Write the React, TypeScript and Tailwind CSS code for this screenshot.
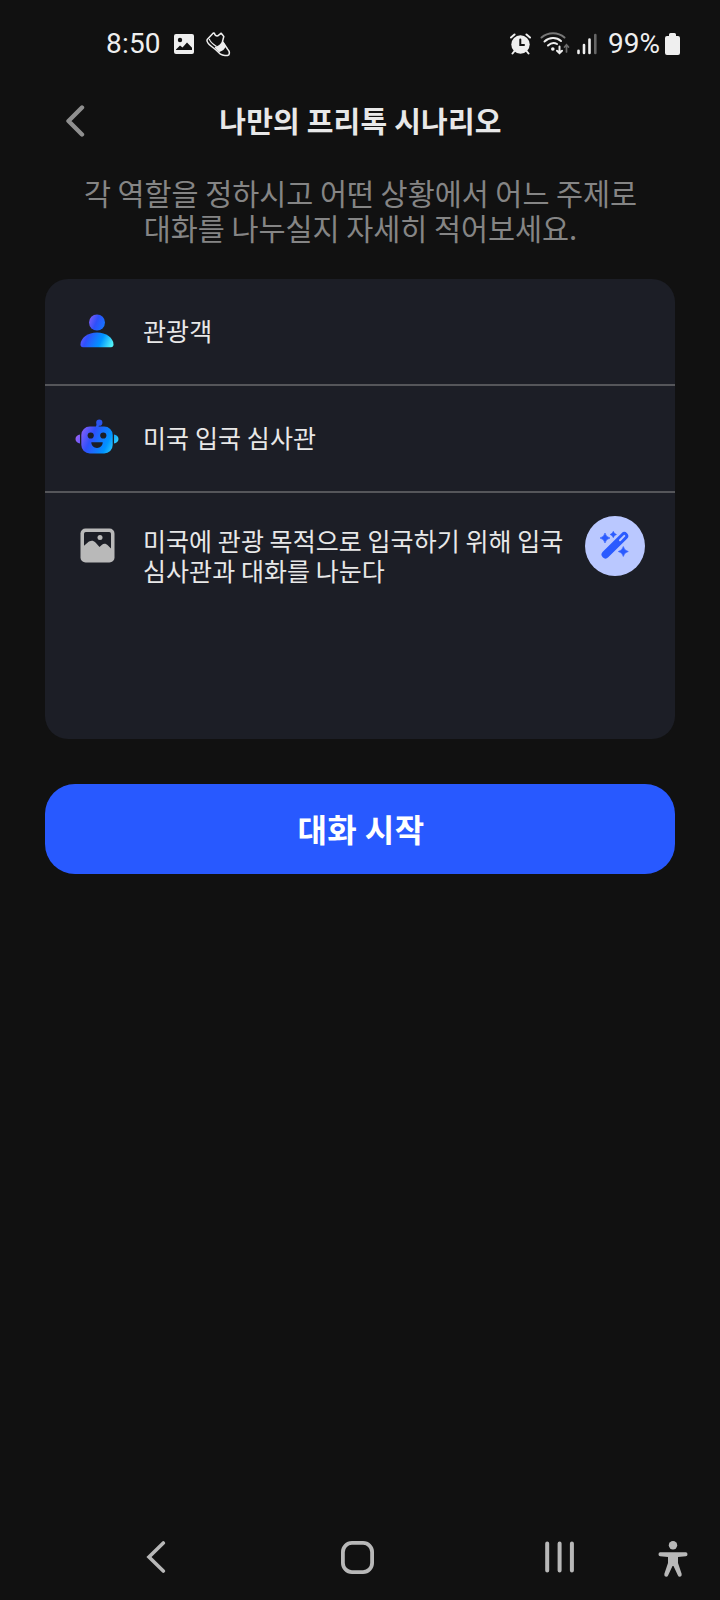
import type { ReactNode } from "react";

function BrandGradient({ id, size }: { id: string; size: number }) {
  return (
    <linearGradient id={id} gradientUnits="userSpaceOnUse" x1="0" y1={size * 0.3} x2={size} y2={size * 0.75}>
      <stop offset="0" stopColor="#9d62f5" />
      <stop offset="0.33" stopColor="#2f50fb" />
      <stop offset="0.7" stopColor="#0094ff" />
      <stop offset="1" stopColor="#4ff0f8" />
    </linearGradient>
  );
}

function PersonIcon() {
  return (
    <svg className="-mt-[1px]" width="34" height="34" viewBox="0 0 34 34">
      <defs>
        <BrandGradient id="person" size={34} />
        <linearGradient id="head" x1="0" y1="0.3" x2="1" y2="0.7">
          <stop offset="0" stopColor="#7a5cf6" />
          <stop offset="0.45" stopColor="#2e4ffa" />
          <stop offset="1" stopColor="#1477ff" />
        </linearGradient>
      </defs>
      <circle cx="17" cy="8.5" r="8" fill="url(#head)" />
      <path
        d="M17 18.5C26 18.5 33.5 24 33.5 30.5C33.5 32.3 32.6 33.3 31 33.3H3C1.4 33.3 0.5 32.3 0.5 30.5C0.5 24 8 18.5 17 18.5Z"
        fill="url(#person)"
      />
    </svg>
  );
}

function RobotIcon() {
  return (
    <svg className="mt-[4px] overflow-visible" width="44" height="34" viewBox="0 0 44 34">
      <defs>
        <BrandGradient id="robot" size={42} />
      </defs>
      <path
        d="M5 10.5V19.5C2.5 19 0.5 17.5 0.5 15C0.5 12.5 2.5 11 5 10.5ZM39 10.5V19.5C41.5 19 43.5 17.5 43.5 15C43.5 12.5 41.5 11 39 10.5Z"
        fill="url(#robot)"
      />
      <rect x="6.3" y="2.5" width="31.4" height="27" rx="8.5" fill="url(#robot)" />
      <path d="M21.8 4L23.5 -1" stroke="#2b5bf3" strokeWidth="2.5" />
      <circle cx="24.3" cy="-1.3" r="3.1" fill="#2b55ee" />
      <circle cx="15.7" cy="11.5" r="3.1" fill="#1c1e26" />
      <circle cx="28.3" cy="11.5" r="3.1" fill="#1c1e26" />
      <path d="M16.3 18.3H27.7C27.7 21.5 25.2 24 22 24S16.3 21.5 16.3 18.3Z" fill="#1c1e26" />
    </svg>
  );
}

function SceneIcon() {
  return (
    <svg width="35" height="35" viewBox="0 0 35 35">
      <rect x="0.5" y="0.5" width="34" height="34" rx="5" fill="#b9b9b9" />
      <path
        d="M5.8 4H29.2Q31 4 31 5.8V20.5L28 17.5C26 15.5 23.7 15.3 21.7 17L19.5 19L15.5 14.5C13 12 10.3 12.3 7.5 14.7L4 17.7V5.8Q4 4 5.8 4Z"
        fill="#1c1e26"
      />
      <circle cx="20" cy="9.5" r="2.5" fill="#b9b9b9" />
    </svg>
  );
}

function WandIcon() {
  return (
    <svg width="30" height="30" viewBox="0 0 30 30" fill="#2b5bff">
      <path d="M5.5 23.5L24.3 5" stroke="#2b5bff" strokeWidth="7.8" strokeLinecap="round" />
      <path d="M20 9.2L24.3 4.9" stroke="#bac8ff" strokeWidth="2" strokeLinecap="round" />
      <path d="M5 2Q5.9 6.1 10 7Q5.9 7.9 5 12Q4.1 7.9 0 7Q4.1 6.1 5 2Z" stroke="#2b5bff" strokeWidth="0.6" />
      <path d="M13.3 0.3Q14 2.8 16.5 3.5Q14 4.2 13.3 6.7Q12.6 4.2 10.1 3.5Q12.6 2.8 13.3 0.3Z" stroke="#2b5bff" strokeWidth="0.5" />
      <path d="M23.3 15.5Q24.2 19.6 28.3 20.5Q24.2 21.4 23.3 25.5Q22.4 21.4 18.3 20.5Q22.4 19.6 23.3 15.5Z" stroke="#2b5bff" strokeWidth="0.6" />
    </svg>
  );
}

function StatusBar() {
  return (
    <div className="flex h-[87px] items-center justify-between pl-[106px] pr-[39px] font-['Roboto',sans-serif] text-[28px] text-[#efefef]">
      <div className="flex items-center">
        <span className="w-[54px] whitespace-nowrap tracking-[0.2px]">8:50</span>
        <svg className="ml-[14px]" width="20" height="20" viewBox="0 0 20 20">
          <rect width="20" height="20" rx="2" fill="#efefef" />
          <circle cx="6" cy="6" r="2.2" fill="#111" />
          <path d="M2 15.5L6 11.5L8.5 13.5L13 8.5L18 13.8V16H2Z" fill="#111" />
        </svg>
        <svg className="ml-[12px] mt-[1px]" width="25" height="25" viewBox="0 0 25 25" fill="none" stroke="#efefef" strokeWidth="1.5" strokeLinejoin="round">
          <path d="M7.3 1L1.2 7.5C0.5 9 2.5 12 5 14L10 18L14.5 22.2C17 23.8 21 24 22.8 22.8C24.2 20.5 23.2 18.8 21.5 17L18.8 13L16.5 9.5L17.8 4.5L15.2 1.2L11.8 3.8C10 4.2 8.8 3 8.5 1.3Z" />
          <path d="M3.3 6.8C4 10 7.5 12.5 10.5 14.5" strokeWidth="1.2" />
          <path d="M9.5 15.5C12.5 15 15 13.2 16.5 10.2L19.2 14C18.2 16.5 16 18.5 13.2 19.2Z" fill="#efefef" />
        </svg>
      </div>
      <div className="flex items-center">
        <svg width="21" height="22" viewBox="0 0 21 22" fill="none" stroke="#efefef" strokeLinecap="round">
          <circle cx="10.5" cy="11.5" r="9.2" fill="#efefef" stroke="none" />
          <path d="M1 4.5L4.5 1.5M20 4.5L16.5 1.5M4.5 18L2.5 20.5M16.5 18L18.5 20.5" strokeWidth="2" />
          <path d="M10.3 6.5V12H14" stroke="#111" strokeWidth="2" />
        </svg>
        <svg className="ml-[9px]" width="30" height="23" viewBox="0 0 30 23" fill="none" stroke="#efefef" strokeWidth="2" strokeLinecap="round">
          <path d="M1.5 5.5C8 -0.3 18 -0.3 24.5 5.5" stroke="#777" />
          <path d="M4.5 9.5C9.5 5 16.5 5 21 9M8 13.5C11 10.8 14.5 10.5 17 12" />
          <circle cx="12.8" cy="17" r="1.8" fill="#efefef" stroke="none" />
          <path d="M19.5 14.5V21M17 18.8L19.5 21.2L22 18.8" />
          <path d="M26.5 20V13M24.5 15L26.5 12.8L28.5 15" stroke="#6b6b6b" strokeWidth="1.7" />
        </svg>
        <svg className="ml-[7px]" width="20" height="22" viewBox="0 0 20 22" strokeWidth="2.6" strokeLinecap="round" stroke="#efefef">
          <path d="M1.5 17.7V20M7 12V20M12.5 6.5V20" />
          <path d="M18.3 2V20" stroke="#666" />
        </svg>
        <span className="ml-[11px] w-[52px] whitespace-nowrap">99%</span>
        <svg className="ml-[5px] mr-[1px] mt-[1px]" width="15" height="22" viewBox="0 0 15 22" fill="#efefef">
          <path d="M4 3V1.5Q4 0 5.5 0H9.5Q11 0 11 1.5V3H13Q15 3 15 5V20Q15 22 13 22H2Q0 22 0 20V5Q0 3 2 3Z" />
        </svg>
      </div>
    </div>
  );
}

function RoleRow({ icon, label }: { icon: ReactNode; label: string }) {
  return (
    <div className="flex h-[107px] items-center border-b-2 border-[#55565a]">
      <div className="flex w-[98px] justify-center pl-[6px]">{icon}</div>
      <span className="pb-[4px] tracking-[0.1px]">{label}</span>
    </div>
  );
}

function NavBar() {
  return (
    <div className="flex h-[86px] items-center pl-[146px] pr-[32px] text-[#b8b8b8]">
      <svg width="20" height="32" viewBox="0 0 20 32" fill="none" stroke="currentColor" strokeWidth="3.6" strokeLinecap="round">
        <path d="M17.3 2L3 16L17.3 30" />
      </svg>
      <svg className="ml-[175px]" width="33" height="33" viewBox="0 0 33 33" fill="none" stroke="currentColor" strokeWidth="3.8">
        <rect x="1.9" y="1.9" width="29.2" height="29.2" rx="9" />
      </svg>
      <svg className="ml-[171px]" width="30" height="32" viewBox="0 0 30 32" stroke="currentColor" strokeWidth="4" strokeLinecap="round">
        <path d="M2.2 2.5V29.5M14.6 2.5V29.5M26.9 2.5V29.5" />
      </svg>
      <svg className="ml-auto mt-[4px]" width="30" height="36" viewBox="0 0 30 36" fill="currentColor">
        <circle cx="15" cy="4.3" r="4.2" />
        <path d="M2.2 11.2H27.8Q29.5 11.4 29.5 13.2Q29.5 15 27.8 15.3L20 16V22L23.7 33Q24 35.5 22 35.8Q20.5 36 19.8 34.2L15.5 25H14.5L10.2 34.2Q9.5 36 8 35.8Q6 35.5 6.3 33L10 22V16L2.2 15.3Q0.5 15 0.5 13.2Q0.5 11.4 2.2 11.2Z" />
      </svg>
    </div>
  );
}

export default function App() {
  return (
    <div className="flex h-[1600px] w-[720px] flex-col bg-[#111111] font-['Noto_Sans_CJK_KR',sans-serif]">
      <StatusBar />

      <header className="grid h-[67px] grid-cols-[66px_1fr_66px] items-center">
        <svg className="ml-[65px]" width="20" height="32" viewBox="0 0 20 32" fill="none" stroke="#8f8f8f" strokeWidth="4.4" strokeLinecap="round" strokeLinejoin="round">
          <path d="M17 2.5L3.5 16L17 29.5" />
        </svg>
        <h1 className="pl-[1px] text-center text-[29px] font-bold tracking-[0.2px] text-[#e8e8e8]">나만의 프리톡 시나리오</h1>
      </header>

      <p className="mt-[21px] pl-[1px] text-center text-[29.4px] leading-[35px] text-[#858585]">
        각 역할을 정하시고 어떤 상황에서 어느 주제로
        <br />
        대화를 나누실지 자세히 적어보세요.
      </p>

      <section className="mx-[45px] mt-[34px] h-[460px] shrink-0 rounded-[23px] bg-[#1c1e26] text-[25px] leading-[30px] text-[#e8e8e8]">
        <RoleRow icon={<PersonIcon />} label="관광객" />
        <RoleRow icon={<RobotIcon />} label="미국 입국 심사관" />
        <div className="flex items-start">
          <div className="flex w-[98px] shrink-0 justify-center pl-[6px] pt-[35px]">
            <SceneIcon />
          </div>
          <p className="w-[442px] whitespace-nowrap pt-[32px] tracking-[0.06px]">
            미국에 관광 목적으로 입국하기 위해 입국
            <br />
            심사관과 대화를 나눈다
          </p>
          <button className="mt-[23px] flex h-[60px] w-[60px] shrink-0 items-center justify-center rounded-full bg-[#bac8ff]">
            <WandIcon />
          </button>
        </div>
      </section>

      <button className="mx-[45px] mt-[45px] h-[90px] shrink-0 rounded-[30px] bg-[#2859ff] pb-[2px] pl-[2px] text-[32px] font-bold tracking-[0.4px] text-white">
        대화 시작
      </button>

      <div className="mt-auto">
        <NavBar />
      </div>
    </div>
  );
}
